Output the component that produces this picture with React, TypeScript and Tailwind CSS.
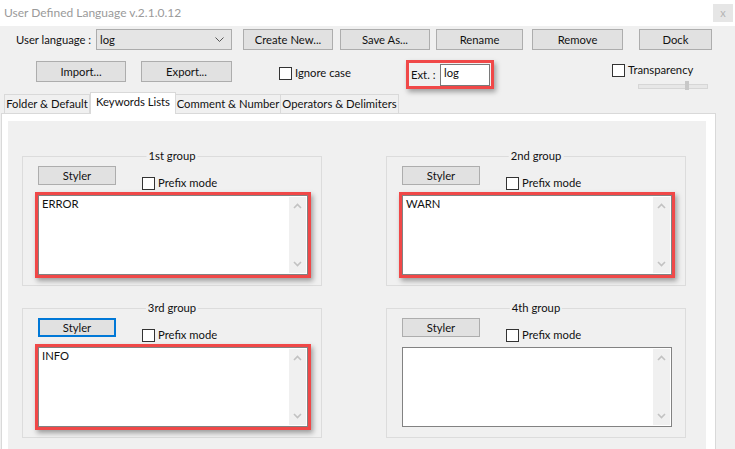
import React from "react";

function Btn({ label, w, focus }: { label: string; w: string; focus?: boolean }) {
  return (
    <div
      className={`${w} h-[21px] flex items-center justify-center bg-[#e1e1e1] ${
        focus ? "border-2 border-[#0078d7]" : "border border-[#adadad]"
      }`}
    >
      {label}
    </div>
  );
}

function Check({ label }: { label: string }) {
  return (
    <div className="flex items-center">
      <div className="w-[13px] h-[13px] border border-[#333333] bg-white shrink-0" />
      <span className="ml-[3px]">{label}</span>
    </div>
  );
}

function Chevron({ up }: { up?: boolean }) {
  return (
    <svg width="9" height="6" viewBox="0 0 9 6">
      <path
        d={up ? "M1 5 L4.5 1.5 L8 5" : "M1 1 L4.5 4.5 L8 1"}
        fill="none"
        stroke="#c2c2c2"
        strokeWidth="1.6"
      />
    </svg>
  );
}

function KeywordBox({ text, marked }: { text: string; marked: boolean }) {
  return (
    <div
      className={`w-[276px] h-[86px] border-[3px] ${
        marked ? "border-[#f04848] shadow-[2px_3px_5px_rgba(0,0,0,0.35)]" : "border-transparent"
      }`}
    >
      <div className="w-full h-full border border-[#828282] bg-white flex">
        <div className="flex-1 px-[3px] pt-[1px]">{text}</div>
        <div className="w-[17px] my-[1px] mr-[1px] bg-[#f0f0f0] flex flex-col items-center justify-between py-[6px]">
          <Chevron up />
          <Chevron />
        </div>
      </div>
    </div>
  );
}

function Group({ title, text, marked, focus }: { title: string; text: string; marked: boolean; focus?: boolean }) {
  return (
    <div className="relative h-[130px] border border-[#dcdcdc] pt-[9px] pl-[15px]">
      <span className="absolute left-1/2 -translate-x-1/2 top-[-9px] bg-[#f0f0f0] px-[2px] leading-[16px]">
        {title}
      </span>
      <div className="flex">
        <div className="h-[19px]">
          <div
            className={`w-[78px] h-[19px] flex items-center justify-center bg-[#e1e1e1] ${
              focus ? "border-2 border-[#0078d7]" : "border border-[#adadad]"
            }`}
          >
            Styler
          </div>
        </div>
        <div className="ml-[26px] mt-[10px]">
          <Check label="Prefix mode" />
        </div>
      </div>
      <div className="ml-[-3px] mt-[2px]">
        <KeywordBox text={text} marked={marked} />
      </div>
    </div>
  );
}

export default function App() {
  return (
    <div className="relative w-[735px] h-[449px] overflow-hidden whitespace-nowrap bg-[#f0f0f0] text-[11.25px] leading-[14px] text-[#111] font-['Lato',sans-serif]">
      <div className="h-[26px] bg-white flex items-center justify-between pl-[4px] pr-[2px]">
        <span className="text-[12px] text-[#9a9a9a]">User Defined Language v.2.1.0.12</span>
        <div className="w-[20px] h-[18px] bg-[#e6e6e6] text-[#b4b4b4] flex items-center justify-center text-[11px]">
          x
        </div>
      </div>

      <div className="mt-[3px] h-[21px] flex items-center pl-[16px]">
        <span className="w-[80px]">User language :</span>
        <div className="w-[136px] h-[21px] border border-[#acacac] bg-[#e5e5e5] flex items-center justify-between pl-[3px] pr-[7px]">
          <span>log</span>
          <svg width="9" height="6" viewBox="0 0 9 6">
            <path d="M0.5 0.5 L4.5 4.5 L8.5 0.5" fill="none" stroke="#555" strokeWidth="1" />
          </svg>
        </div>
        <div className="ml-[11px]"><Btn label="Create New..." w="w-[90px]" /></div>
        <div className="ml-[7px]"><Btn label="Save As..." w="w-[90px]" /></div>
        <div className="ml-[6px]"><Btn label="Rename" w="w-[87px]" /></div>
        <div className="ml-[9px]"><Btn label="Remove" w="w-[91px]" /></div>
        <div className="ml-[16px]"><Btn label="Dock" w="w-[73px]" /></div>
      </div>

      <div className="mt-[10px] h-[32px] flex items-start">
        <div className="ml-[36px] mt-[1px]"><Btn label="Import..." w="w-[90px]" /></div>
        <div className="ml-[15px] mt-[1px]"><Btn label="Export..." w="w-[91px]" /></div>
        <div className="ml-[47px] mt-[6px] w-[127px]">
          <Check label="Ignore case" />
        </div>
        <div className="w-[88px] h-[29px] border-[3px] border-[#f04848] shadow-[2px_3px_5px_rgba(0,0,0,0.35)] flex items-center pl-[2px]">
          <span className="w-[29px]">Ext. :</span>
          <div className="w-[50px] h-[22px] border border-[#7a7a7a] bg-white pl-[3px] pt-[1px]">log</div>
        </div>
        <div className="ml-[118px] mt-[3px] flex flex-col">
          <Check label="Transparency" />
          <div className="relative ml-[26px] mt-[7px] w-[70px] h-[5px] border border-[#d6d6d6] bg-[#e7e7e7]">
            <div className="absolute left-[46px] top-[-4px] w-[4px] h-[9px] bg-[#c8c8c8]" />
          </div>
        </div>
      </div>

      <div className="h-[21px] flex items-end pl-[4px]">
        <div className="w-[86px] h-[19px] border border-b-0 border-[#d9d9d9] flex items-center justify-center">
          Folder &amp; Default
        </div>
        <div className="relative z-10 w-[86px] h-[22px] mb-[-1px] border border-b-0 border-[#d9d9d9] bg-white flex items-start justify-center pt-[2px]">
          Keywords Lists
        </div>
        <div className="w-[105px] h-[19px] border border-b-0 border-l-0 border-[#d9d9d9] flex items-center justify-center">
          Comment &amp; Number
        </div>
        <div className="w-[118px] h-[19px] border border-b-0 border-l-0 border-[#d9d9d9] flex items-center justify-center">
          Operators &amp; Delimiters
        </div>
      </div>

      <div className="ml-[1px] w-[715px] h-[360px] border border-[#d9d9d9] bg-white pl-[6px] pt-[7px]">
        <div className="w-[698px] h-[350px] bg-[#f0f0f0] pl-[14px] pt-[35px]">
          <div className="grid grid-cols-[300px_300px] gap-x-[64px] gap-y-[22px]">
            <Group title="1st group" text="ERROR" marked />
            <Group title="2nd group" text="WARN" marked />
            <Group title="3rd group" text="INFO" marked focus />
            <Group title="4th group" text="" marked={false} />
          </div>
        </div>
      </div>
    </div>
  );
}
